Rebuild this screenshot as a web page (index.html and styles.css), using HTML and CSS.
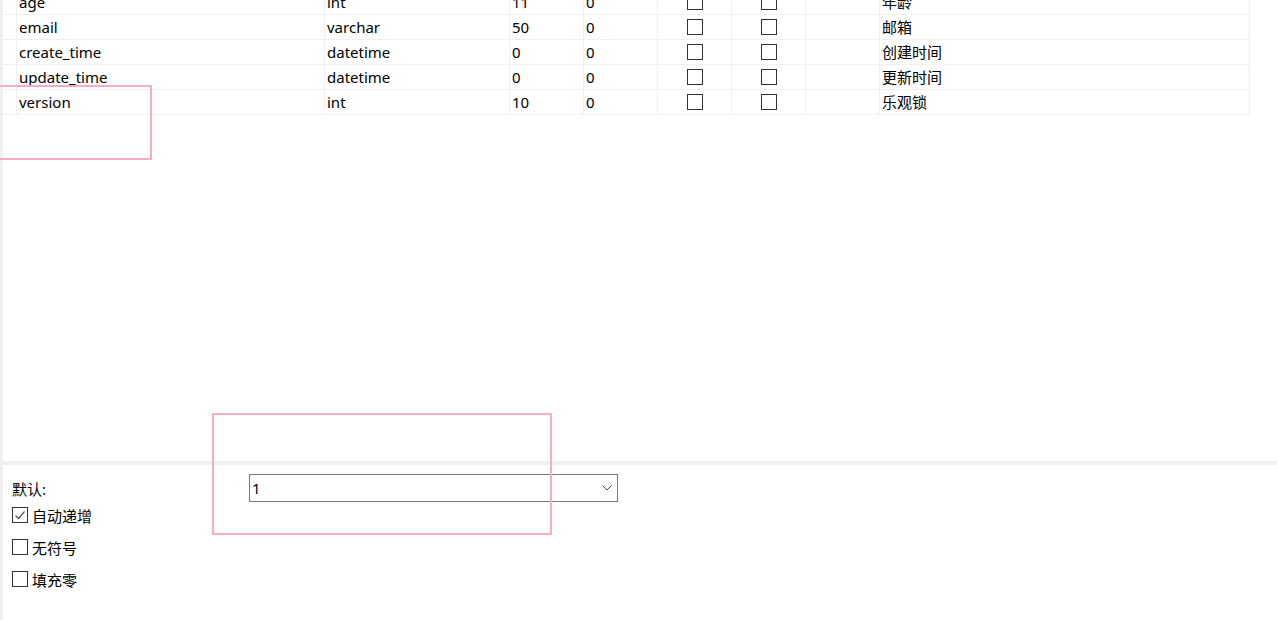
FILE: index.html
```html
<!DOCTYPE html>
<html lang="zh-CN">
<head>
<meta charset="utf-8">
<title>Table design</title>
<link rel="stylesheet" href="styles.css">
</head>
<body>
<div class="app">
  <div class="grid-view">
    <div class="table">
      <div class="cell rh"></div><div class="cell">age</div><div class="cell">int</div><div class="cell">11</div><div class="cell">0</div><div class="cell ck"><span class="box"></span></div><div class="cell ck"><span class="box"></span></div><div class="cell"></div><div class="cell">年龄</div>
      <div class="cell rh"></div><div class="cell">email</div><div class="cell">varchar</div><div class="cell">50</div><div class="cell">0</div><div class="cell ck"><span class="box"></span></div><div class="cell ck"><span class="box"></span></div><div class="cell"></div><div class="cell">邮箱</div>
      <div class="cell rh"></div><div class="cell">create_time</div><div class="cell">datetime</div><div class="cell">0</div><div class="cell">0</div><div class="cell ck"><span class="box"></span></div><div class="cell ck"><span class="box"></span></div><div class="cell"></div><div class="cell">创建时间</div>
      <div class="cell rh"></div><div class="cell">update_time</div><div class="cell">datetime</div><div class="cell">0</div><div class="cell">0</div><div class="cell ck"><span class="box"></span></div><div class="cell ck"><span class="box"></span></div><div class="cell"></div><div class="cell">更新时间</div>
      <div class="cell rh"></div><div class="cell">version</div><div class="cell">int</div><div class="cell">10</div><div class="cell">0</div><div class="cell ck"><span class="box"></span></div><div class="cell ck"><span class="box"></span></div><div class="cell"></div><div class="cell">乐观锁</div>
    </div>
  </div>
  <div class="separator"></div>
  <div class="props">
    <div class="prop-row">
      <span class="prop-label">默认:</span>
      <div class="select">
        <span class="select-value">1</span>
        <svg class="chevron" width="10" height="6" viewBox="0 0 10 6"><path d="M0.5 0.5 L5 5 L9.5 0.5" fill="none" stroke="#444" stroke-width="1"/></svg>
      </div>
    </div>
    <div class="options">
      <label class="option"><span class="box checked"><svg width="14" height="14" viewBox="0 0 14 14"><path d="M2.5 7.5 L5.5 10.5 L11.5 3.5" fill="none" stroke="#555" stroke-width="1.2"/></svg></span>自动递增</label>
      <label class="option"><span class="box"></span>无符号</label>
      <label class="option"><span class="box"></span>填充零</label>
    </div>
  </div>
  <div class="highlight hl-1"></div>
  <div class="highlight hl-2"></div>
</div>
</body>
</html>
```
FILE: styles.css
```css
html, body {
  margin: 0;
  padding: 0;
  background: #ffffff;
}
body {
  font-family: "Noto Sans", "Noto Sans CJK SC", sans-serif;
  font-size: 15px;
  color: #000;
  overflow: hidden;
}
.app {
  position: relative;
  height: 620px;
  display: flex;
  flex-direction: column;
  border-left: 3px solid #f0f0f0;
  box-sizing: border-box;
}
.grid-view {
  height: 461px;
  overflow: hidden;
  flex: none;
}
.table {
  display: grid;
  grid-template-columns: 14px 308px 185px 74px 74px 74px 74px 74px 370px;
  grid-auto-rows: 25px;
  margin-top: -10px;
  width: max-content;
}
.cell {
  box-sizing: border-box;
  border-right: 1px solid #f0f0f0;
  border-bottom: 1px solid #f0f0f0;
  display: flex;
  align-items: center;
  padding-left: 2px;
  white-space: nowrap;
  line-height: 1;
}
.cell.ck {
  justify-content: center;
  padding-left: 0;
}
.box {
  box-sizing: border-box;
  width: 16px;
  height: 16px;
  border: 1px solid #333;
  background: #fff;
  display: inline-flex;
  align-items: center;
  justify-content: center;
  flex: none;
}
.separator {
  height: 4px;
  background: #f0f0f0;
  margin-left: -3px;
  flex: none;
}
.props {
  padding: 9px 0 0 9px;
  flex: 1;
}
.prop-row {
  display: flex;
  align-items: center;
  height: 28px;
}
.prop-label {
  width: 237px;
  flex: none;
}
.select {
  box-sizing: border-box;
  width: 369px;
  height: 28px;
  border: 1px solid #7a7a7a;
  display: flex;
  align-items: center;
  justify-content: space-between;
  padding: 0 5px 0 2px;
}
.chevron {
  display: block;
}
.options {
  display: flex;
  flex-direction: column;
  gap: 16px;
  padding-top: 5px;
}
.option {
  display: flex;
  align-items: center;
  gap: 4px;
  height: 16px;
  white-space: nowrap;
}
.highlight {
  position: absolute;
  border: 2px solid #f8aac9;
  box-sizing: border-box;
  pointer-events: none;
}
.hl-1 {
  left: -10px;
  top: 85px;
  width: 159px;
  height: 75px;
}
.hl-2 {
  left: 209px;
  top: 413px;
  width: 340px;
  height: 122px;
}
```
